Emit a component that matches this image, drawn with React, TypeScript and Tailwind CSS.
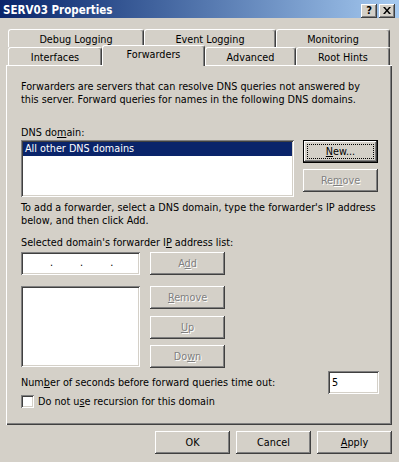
import clsx from 'clsx';
import type { ReactNode } from 'react';

// classic Win2000 3D edges
const raised = 'shadow-[inset_-1px_-1px_#404040,inset_1px_1px_#ffffff,inset_-2px_-2px_#808080]';
const sunken = 'shadow-[inset_1px_1px_#808080,inset_-1px_-1px_#ffffff,inset_2px_2px_#404040,inset_-2px_-2px_#d4d0c8]';
const panel = 'shadow-[inset_1px_1px_#ffffff,inset_-1px_-1px_#404040,inset_-2px_-2px_#808080]';

interface BtnProps {
  children: ReactNode;
  disabled?: boolean;
  isDefault?: boolean;
  className?: string;
}

function Btn({ children, disabled = false, isDefault = false, className }: BtnProps) {
  return (
    <div
      className={clsx(
        'relative flex h-[23px] w-[75px] shrink-0 items-center justify-center bg-[#d4d0c8] leading-[13px]',
        raised,
        isDefault && 'border border-black',
        disabled && 'text-[#808080] [text-shadow:1px_1px_0_#ffffff]',
        className
      )}
    >
      {children}
      {isDefault && <span className="absolute inset-[3px] border border-dotted border-black" />}
    </div>
  );
}

function Tab({ children, className, selected = false }: { children: ReactNode; className: string; selected?: boolean }) {
  return (
    <div
      className={clsx(
        'flex shrink-0 justify-center rounded-t-[3px] border-t border-r border-l border-t-white border-r-[#404040] border-l-white bg-[#d4d0c8] shadow-[inset_-1px_0_#808080]',
        selected ? 'relative z-10 -mt-[2px] h-[21px] items-start pt-[2px]' : 'h-full items-center pt-[1px]',
        className
      )}
    >
      {children}
    </div>
  );
}

export default function App() {
  return (
    <div className="h-[462px] w-[399px] overflow-hidden bg-[#d4d0c8] font-['DejaVu_Sans_Condensed','Liberation_Sans',Arial,sans-serif] text-[10.75px] leading-[13px] text-black">
      {/* title bar */}
      <div className="flex h-[18px] items-center justify-between bg-linear-to-r from-[#0a246a] to-[#a6caf0] pr-[4px] pl-[3px]">
        <span className="pt-[2px] text-[11.5px] font-bold text-white">SERV03 Properties</span>
        <div className="mt-[3px] flex gap-[2px]">
          <div className={clsx('flex h-[14px] w-[16px] items-center justify-center bg-[#d4d0c8] text-[11px] font-bold', raised)}>?</div>
          <div className={clsx('flex h-[14px] w-[16px] items-center justify-center bg-[#d4d0c8]', raised)}>
            <svg width="8" height="7" viewBox="0 0 8 7">
              <path d="M0 0h2l2 2.5L6 0h2L5 3.5 8 7H6L4 4.5 2 7H0l3-3.5z" fill="#000" />
            </svg>
          </div>
        </div>
      </div>

      {/* tabs */}
      <div className="pt-[11px]">
        <div className="flex h-[18px] pl-[8px]">
          <Tab className="w-[136px]">Debug Logging</Tab>
          <Tab className="w-[132px]">Event Logging</Tab>
          <Tab className="w-[114px]">Monitoring</Tab>
        </div>
        <div className="flex h-[18px] items-start pl-[8px]">
          <Tab className="w-[94px]">Interfaces</Tab>
          <Tab className="w-[103px]" selected>
            Forwarders
          </Tab>
          <Tab className="w-[91px]">Advanced</Tab>
          <Tab className="w-[94px]">Root Hints</Tab>
        </div>
      </div>

      {/* page */}
      <div className={clsx('ml-[6px] flex h-[360px] w-[386px] flex-col pl-[15px]', panel)}>
        <p className="mt-[15px]">
          Forwarders are servers that can resolve DNS queries not answered by
          <br />
          this server. Forward queries for names in the following DNS domains.
        </p>

        <div className="mt-[20px]">
          DNS do<u>m</u>ain:
        </div>
        <div className="mt-[1px] flex items-start">
          <div className={clsx('h-[57px] w-[273px] bg-white p-[2px]', sunken)}>
            <div className="h-[14px] bg-[#0a246a] pl-[2px] text-white">All other DNS domains</div>
          </div>
          <div className="ml-[9px] flex flex-col gap-[6px]">
            <Btn isDefault>
              <span>
                <u>N</u>ew...
              </span>
            </Btn>
            <Btn disabled>
              <span>
                Re<u>m</u>ove
              </span>
            </Btn>
          </div>
        </div>

        <p className="mt-[4px]">
          To add a forwarder, select a DNS domain, type the forwarder's IP address
          <br />
          below, and then click Add.
        </p>

        <div className="mt-[9px]">
          Selected domain's forwarder I<u>P</u> address list:
        </div>
        <div className="mt-[3px] flex items-start">
          <div className={clsx('flex h-[23px] w-[119px] items-center gap-[27px] bg-white pb-[3px] pl-[29px]', sunken)}>
            <span>.</span>
            <span>.</span>
            <span>.</span>
          </div>
          <Btn disabled className="ml-[10px]">
            <span>
              A<u>d</u>d
            </span>
          </Btn>
        </div>

        <div className="mt-[11px] flex items-start">
          <div className={clsx('h-[81px] w-[119px] bg-white', sunken)} />
          <div className="ml-[10px] flex flex-col">
            <Btn disabled>
              <span>
                <u>R</u>emove
              </span>
            </Btn>
            <Btn disabled className="mt-[7px]">
              <span>
                <u>U</u>p
              </span>
            </Btn>
            <Btn disabled className="mt-[6px]">
              <span>
                Do<u>w</u>n
              </span>
            </Btn>
          </div>
        </div>

        <div className="mt-[3px] flex items-center pr-[13px]">
          <span>
            Num<u>b</u>er of seconds before forward queries time out:
          </span>
          <div className={clsx('ml-auto flex h-[23px] w-[51px] items-center bg-white pl-[4px]', sunken)}>5</div>
        </div>

        <div className="mt-[1px] flex items-center">
          <div className={clsx('h-[13px] w-[13px] bg-white', sunken)} />
          <span className="ml-[4px]">
            Do not u<u>s</u>e recursion for this domain
          </span>
        </div>
      </div>

      {/* dialog buttons */}
      <div className="mt-[6px] flex justify-end gap-[6px] pr-[7px]">
        <Btn>OK</Btn>
        <Btn>Cancel</Btn>
        <Btn>
          <span>
            <u>A</u>pply
          </span>
        </Btn>
      </div>
    </div>
  );
}
